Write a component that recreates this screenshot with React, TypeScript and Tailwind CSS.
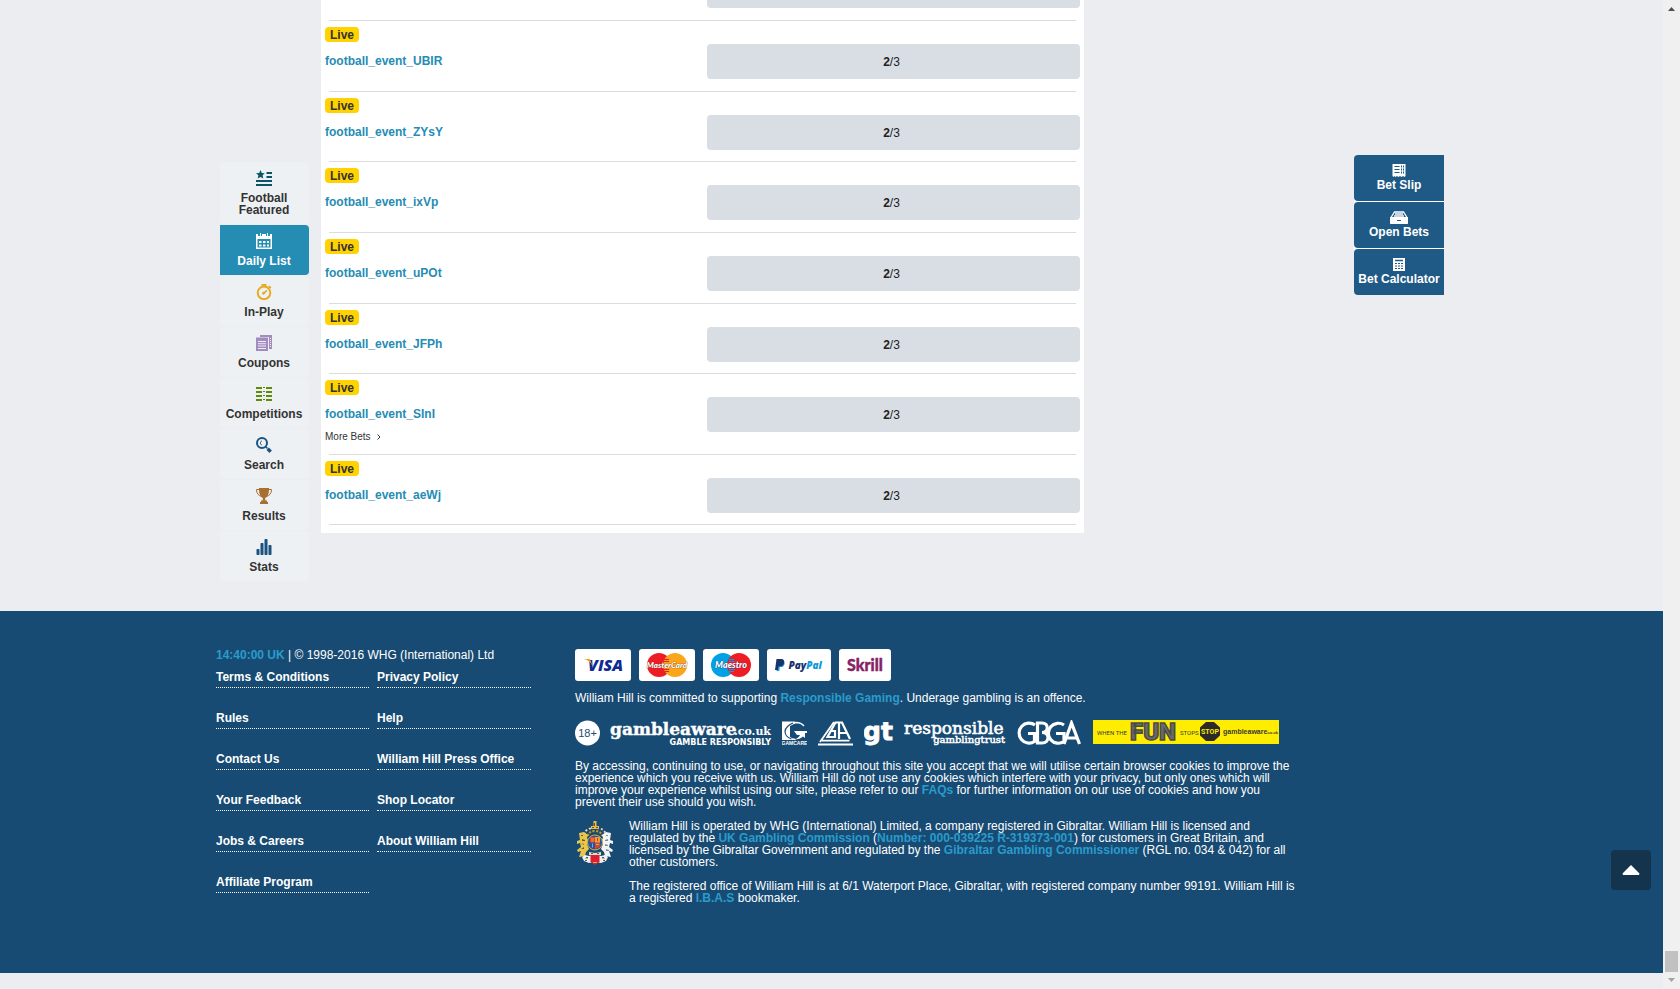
import type { ReactNode } from 'react'

/* ---------- sidebar icons ---------- */

const FeaturedIcon = () => (
  <svg viewBox="0 0 16 16" className="size-4" fill="#0b5566" aria-hidden="true">
    <path d="M4.500 0l1.300 2.900 3 .3-2.200 2.100.7 3.200-2.800-1.600-2.800 1.600.7-3.200L0 3.200l3.200-.3z" />
    <path d="M10.500 2h5.500v2h-5.500zM10.500 6h5.500v2h-5.500zM0 10h16v2H0zM0 14h16v2H0z" />
  </svg>
)
const DailyIcon = () => (
  <svg viewBox="0 0 16 16" className="size-4" fill="none" aria-hidden="true">
    <path fill="#fff" fillRule="evenodd" d="M0 1h2v2h2V0h1v3h1V1h4v2h1V0h1v3h2V1h2v15H0zM1.500 6v8.500h13V6z" />
    <path fill="#fff" d="M3 8h2.500v2H3zM7 8h2.500v2H7zM11 8h2v2h-2zM3 11.500h2.500v2H3zM7 11.500h2.500v2H7zM11 11.500h2v2h-2z" />
  </svg>
)
const InPlayIcon = () => (
  <svg viewBox="0 0 16 16" className="size-4" fill="none" stroke="#e6a91c" aria-hidden="true">
    <circle cx="8" cy="8.800" r="6.300" strokeWidth="1.900" />
    <path d="M5.500 .9h5" strokeWidth="1.800" />
    <path d="M12.800 2.200l2 2" strokeWidth="1.800" />
    <path d="M7.500 9.300L11 6.300" strokeWidth="1.600" />
    <circle cx="7.500" cy="9.300" r="1" fill="#e6a91c" />
  </svg>
)
const CouponsIcon = () => (
  <svg viewBox="0 0 16 16" className="size-4" fill="#a48bbf" aria-hidden="true">
    <path d="M4 0h12.500v14H13V2H4z" />
    <path fillRule="evenodd" d="M0 2.500h12v13.500H0zM2 6v1h8V6zM2 8.300v1h8v-1zM2 10.600v1h8v-1zM2 13v1h8v-1z" />
    <path stroke="#edf1f3" strokeWidth="1" strokeDasharray="1 1" d="M14.500 3v10" />
  </svg>
)
const CompetitionsIcon = () => (
  <svg viewBox="0 0 16 16" className="size-4" fill="#5f8a0c" aria-hidden="true">
    {[1, 5, 9, 13].map((y) => (
      <g key={y}>
        <rect x="0" y={y} width="6" height="2" />
        <rect x="10" y={y} width="6" height="2" />
        <rect x="7" y={y} width="2" height="1" />
      </g>
    ))}
  </svg>
)
const SearchIcon = () => (
  <svg viewBox="0 0 16 16" className="size-4" fill="none" stroke="#1c5280" aria-hidden="true">
    <circle cx="6" cy="6" r="5" strokeWidth="2" />
    <path d="M6 3.800a2.300 2.300 0 0 0 0 4.400" strokeWidth="0.800" />
    <path d="M9.800 9.800l1.700 1.700" strokeWidth="1.500" />
    <path d="M11.700 11.700l3 3" strokeWidth="3.400" />
  </svg>
)
const ResultsIcon = () => (
  <svg viewBox="0 0 16 16" className="size-4" fill="#a96f31" aria-hidden="true">
    <path d="M3 0h10v2c0 4-1.500 7-3.800 8v2.500H11V14h1v2H4v-2h1v-1.500h1.800V10C4.500 9 3 6 3 2z" />
    <path fill="none" stroke="#a96f31" d="M3.500 1.500H.5c0 4 2 6 5 7M12.500 1.500h3c0 4-2 6-5 7" />
  </svg>
)
const StatsIcon = () => (
  <svg viewBox="0 0 16 16" className="size-4" fill="#1c5280" aria-hidden="true">
    <rect x="0.500" y="10" width="3" height="6" rx="0.700" />
    <rect x="4.500" y="4" width="3" height="12" rx="0.700" />
    <rect x="8.500" y="0" width="3" height="16" rx="0.700" />
    <rect x="12.500" y="6" width="3" height="10" rx="0.700" />
  </svg>
)

const sports: { label: string; icon: ReactNode; active?: boolean }[] = [
  { label: 'Football Featured', icon: <FeaturedIcon /> },
  { label: 'Daily List', icon: <DailyIcon />, active: true },
  { label: 'In-Play', icon: <InPlayIcon /> },
  { label: 'Coupons', icon: <CouponsIcon /> },
  { label: 'Competitions', icon: <CompetitionsIcon /> },
  { label: 'Search', icon: <SearchIcon /> },
  { label: 'Results', icon: <ResultsIcon /> },
  { label: 'Stats', icon: <StatsIcon /> },
]

function Sidebar() {
  return (
    <nav className="mt-[162px] flex w-[89px] shrink-0 flex-col gap-px" aria-label="Football">
      {sports.map((s) => (
        <a
          key={s.label}
          href="#"
          className={
            s.active
              ? 'flex flex-col items-center gap-1.5 rounded-r bg-[#258cb4] py-2 pr-[5px] pl-1 text-center font-bold text-white'
              : 'flex flex-col items-center gap-1.5 rounded bg-[#edf1f3] py-2 pr-[5px] pl-1 text-center font-bold text-[#333]'
          }
        >
          {s.icon}
          <span>{s.label}</span>
        </a>
      ))}
    </nav>
  )
}

/* ---------- events ---------- */

const events = [
  { name: 'football_event_UBIR' },
  { name: 'football_event_ZYsY' },
  { name: 'football_event_ixVp' },
  { name: 'football_event_uPOt' },
  { name: 'football_event_JFPh' },
  { name: 'football_event_SInI', more: true },
  { name: 'football_event_aeWj' },
]

function Events() {
  return (
    <main className="w-[763px] shrink-0 self-start bg-white pb-2">
      <div className="flex justify-end px-1">
        <div className="h-2 w-[373px] rounded-b bg-[#d9dee5]" />
      </div>
      <div className="mx-2 mt-3 h-px bg-[#dcdcdc]" />
      <ul>
        {events.map((e) => (
          <li
            key={e.name}
            className={
              e.more
                ? 'flex h-[81px] flex-col'
                : 'flex h-[71px] flex-col last:h-[70px] nth-[3n+2]:h-[70px]'
            }
          >
            <div className="flex flex-1 justify-between px-1">
              <div className="flex flex-col items-start pt-1.5">
                <span className="rounded bg-[#ffd200] px-[5px] pt-px text-center font-bold leading-[14px] text-[#333]">
                  Live
                </span>
                <a href="#" className="mt-[13px] font-bold text-[#258cb4]">
                  {e.name}
                </a>
                {e.more && (
                  <a href="#" className="mt-3 flex items-center gap-1.5 text-[10px] leading-[10px] text-[#333]">
                    More Bets
                    <svg viewBox="0 0 4 6" className="h-1.5 w-1" fill="none" stroke="#333" aria-hidden="true">
                      <path d="M.5.5L3 3 .5 5.500" />
                    </svg>
                  </a>
                )}
              </div>
              <button type="button" className="mt-[23px] h-[35px] w-[373px] rounded bg-[#d9dee5] pr-1 text-[#222]">
                <b>2</b>/3
              </button>
            </div>
            <div className="mx-2 h-px bg-[#dcdcdc]" />
          </li>
        ))}
      </ul>
    </main>
  )
}

/* ---------- bet tools ---------- */

const SlipIcon = () => (
  <svg viewBox="0 0 14 13" className="h-[13px] w-3.5" aria-hidden="true">
    <path fill="#fff" d="M.5 0h13v12l-1 1-1.500-1-1.500 1L8 12l-1.500 1L5 12l-1.500 1-1-1-1 1-1-1z" />
    <path stroke="#1f5a86" d="M2.500 2.500h5M2.500 5.500h5M2.500 8.500h5M9.500 1.500v2M9.500 4.500v2M9.500 7.500v2M11.500 1.500v2M11.500 4.500v2M11.500 7.500v2" />
  </svg>
)
const TrayIcon = () => (
  <svg viewBox="0 0 18 13" className="h-[13px] w-[18px]" aria-hidden="true">
    <path fill="none" stroke="#fff" strokeWidth="1.300" d="M1 6.500L4.500 1h9L17 6.500M4 5h10M5 3h8" />
    <path fill="#fff" d="M0 6h18v6.500l-.5.5H.5l-.5-.5z" />
    <path stroke="#1f5a86" d="M7 9.500h4" />
  </svg>
)
const CalcIcon = () => (
  <svg viewBox="0 0 12 13" className="h-[13px] w-3" aria-hidden="true">
    <path fill="#fff" d="M0 0h12v13H0z" />
    <path stroke="#1f5a86" strokeWidth="1.500" d="M2 2.500h8" />
    <path stroke="#1f5a86" strokeWidth="1.200" strokeDasharray="2 1" d="M2 5.500h8M2 8h8M2 10.500h8" />
  </svg>
)

const tools: { label: string; icon: ReactNode }[] = [
  { label: 'Bet Slip', icon: <SlipIcon /> },
  { label: 'Open Bets', icon: <TrayIcon /> },
  { label: 'Bet Calculator', icon: <CalcIcon /> },
]

function BetTools() {
  return (
    <aside className="mt-[155px] flex w-[90px] flex-col gap-px self-start rounded-l bg-white">
      {tools.map((t) => (
        <button
          key={t.label}
          type="button"
          className="flex h-[46px] flex-col items-center gap-0.5 rounded-l bg-[#1f5a86] pt-[9px] font-bold whitespace-nowrap text-white"
        >
          {t.icon}
          <span>{t.label}</span>
        </button>
      ))}
    </aside>
  )
}

/* ---------- footer logos ---------- */

const SANS = 'Liberation Sans, sans-serif'
const SLAB = 'DejaVu Serif, serif'
const NARROW = 'Roboto, sans-serif'

function PaymentCards() {
  return (
    <div className="flex gap-2">
      <svg viewBox="0 0 56 32" className="h-8 w-14" role="img" aria-label="Visa">
        <rect width="56" height="32" rx="3" fill="#fff" />
        <text x="13" y="22" fontFamily="Open Sans, sans-serif" fontWeight="800" fontStyle="italic" fontSize="16" fill="#0f2a94">VISA</text>
        <path fill="#f7a01b" d="M9 10h6l2.500 7c-2-4-4.500-6-8.500-7z" />
      </svg>
      <svg viewBox="0 0 56 32" className="h-8 w-14" role="img" aria-label="MasterCard">
        <rect width="56" height="32" rx="3" fill="#fff" />
        <circle cx="20" cy="16" r="12" fill="#ee1c25" />
        <circle cx="36" cy="16" r="12" fill="#faa61a" />
        <path stroke="#ee1c25" d="M25 10.500h5M24 12.500h6M24 20.500h6M25 22.500h5" />
        <text x="28" y="19" textAnchor="middle" fontFamily="Lato, sans-serif" fontWeight="900" fontStyle="italic" fontSize="8" fill="#fff" stroke="#7a3a20" strokeWidth="0.600" paintOrder="stroke">MasterCard</text>
      </svg>
      <svg viewBox="0 0 56 32" className="h-8 w-14" role="img" aria-label="Maestro">
        <rect width="56" height="32" rx="3" fill="#fff" />
        <circle cx="20" cy="16" r="12" fill="#00a2e5" />
        <circle cx="36" cy="16" r="12" fill="#ee1c25" />
        <path stroke="#00a2e5" d="M26 10.500h5M26 12.500h6M26 20.500h6M26 22.500h5" />
        <text x="28" y="19" textAnchor="middle" fontFamily="Lato, sans-serif" fontWeight="900" fontStyle="italic" fontSize="9" fill="#fff" stroke="#3a3a70" strokeWidth="0.600" paintOrder="stroke">Maestro</text>
      </svg>
      <svg viewBox="0 0 64 32" className="h-8 w-16" role="img" aria-label="PayPal">
        <rect width="64" height="32" rx="3" fill="#fff" />
        <path fill="#0d99d6" d="M11.500 12h5c1.800 1 1.300 5.500-1.700 6h-2l-.6 4H9.500z" />
        <path fill="#17326d" d="M9.500 10h5.500c3.500.3 3 7-2 7.300h-1.600l-.6 3.700H8z" />
        <text x="21.500" y="20" fontFamily="Open Sans, sans-serif" fontWeight="800" fontStyle="italic" fontSize="10" fill="#17326d">Pay<tspan fill="#0d99d6">Pal</tspan></text>
      </svg>
      <svg viewBox="0 0 52 32" className="h-8 w-[52px]" role="img" aria-label="Skrill">
        <rect width="52" height="32" rx="3" fill="#fff" />
        <text x="26" y="22" textAnchor="middle" fontFamily="Lato, sans-serif" fontWeight="900" fontSize="16" fill="#862165" stroke="#862165" strokeWidth="0.400">Skrill</text>
      </svg>
    </div>
  )
}

function PartnerLogos() {
  return (
    <div className="mt-4 flex gap-2.5">
      <svg viewBox="0 0 25 26" className="h-[26px] w-[25px]" role="img" aria-label="18+">
        <circle cx="12.500" cy="13" r="12.500" fill="#fff" />
        <text x="12.500" y="17" textAnchor="middle" fontFamily={SANS} fontSize="11" fill="#184b73">18+</text>
      </svg>
      <svg viewBox="0 0 162 26" className="h-[26px] w-[162px]" role="img" aria-label="gambleaware.co.uk, gamble responsibly" fill="#fff">
        <text x="0" y="15" fontFamily={SLAB} fontWeight="700" fontSize="17" stroke="#fff" strokeWidth="0.400">gambleaware</text>
        <text x="161" y="15" textAnchor="end" fontFamily={SLAB} fontWeight="700" fontSize="11">.co.uk</text>
        <text x="161" y="25" textAnchor="end" fontFamily="DejaVu Sans, sans-serif" fontWeight="700" fontSize="8">GAMBLE RESPONSIBLY</text>
      </svg>
      <svg viewBox="0 0 25 26" className="h-[26px] w-[25px]" role="img" aria-label="GamCare">
        <path fill="#fff" d="M0 1.500h13v2L8 6v12l4 2H0z" />
        <path fill="none" stroke="#fff" strokeWidth="1.500" d="M22 6c-2-2.500-5-3.500-8-3.500C8 3 4.500 7 4.500 11.500s4 8 9 8" />
        <path fill="none" stroke="#184b73" strokeWidth="1.200" d="M11 3C7 4.500 3 8 3 11.500S6 18 9.500 19" />
        <path fill="#fff" d="M12 11h13v2h-2v5l-2-1.500c-2 2-5 3-8.500 3 2.500-1 4.500-2.500 5.500-4.500h-3z" />
        <text x="12.500" y="25" textAnchor="middle" fontFamily={SANS} fontWeight="700" fontSize="5" fill="#fff">GAMCARE</text>
      </svg>
      <svg viewBox="0 0 37 26" className="h-[26px] w-[37px]" role="img" aria-label="GA" fill="none" stroke="#fff" strokeWidth="2.200">
        <path d="M21 2.500h-2.500L10.500 17H18v-6h-4.500" />
        <path d="M22 19V2.500h3L33 19M22 13h8" />
        <path d="M5 20.700h27.500M1 24.500h35M17 2L3 22" strokeWidth="1.800" />
      </svg>
      <svg viewBox="0 0 30 26" className="h-[26px] w-[30px]" role="img" aria-label="gt">
        <text x="-1" y="19.500" fontFamily="DejaVu Sans, sans-serif" fontWeight="700" fontSize="25" fill="#fff" stroke="#fff" strokeWidth="0.800">gt</text>
      </svg>
      <svg viewBox="0 0 102 26" className="h-[26px] w-[102px]" role="img" aria-label="responsible gambling trust" fill="#fff">
        <text x="0" y="14" fontFamily={SLAB} fontSize="17" stroke="#fff" strokeWidth="0.600">responsible</text>
        <text x="101" y="23" textAnchor="end" fontFamily={SLAB} fontSize="10" stroke="#fff" strokeWidth="0.500">gamblingtrust</text>
      </svg>
      <svg viewBox="0 0 65 26" className="h-[26px] w-[65px]" role="img" aria-label="GBGA" fill="none" stroke="#fff" strokeWidth="3.200">
        <path d="M19 5A10 10 0 1 0 18.500 21.500V13.500H12" />
        <path d="M21.500 3H26c7 0 7 9.500 0 9.500 8 0 8 10.500 0 10.500h-4.500z" />
        <path d="M48 5A10 10 0 1 0 48 21.500V13.500h-8" />
        <path d="M48 24L55.500 3l8 21M50 18h11" />
      </svg>
      <svg viewBox="0 0 188 26" className="h-[26px] w-[188px]" role="img" aria-label="When the fun stops, stop">
        <rect x="2" width="186" height="24" fill="#ffed00" />
        <g fill="#3a3a36">
          <text x="6" y="14.500" fontFamily={NARROW} fontSize="6">WHEN THE</text>
          <text x="39" y="20" fontFamily="Roboto, sans-serif" fontWeight="900" fontSize="24" fill="#6b6a66" stroke="#4a4a47" strokeWidth="1.500">FUN</text>
          <text x="89" y="14.500" fontFamily={NARROW} fontSize="6">STOPS</text>
          <path fill="#2b2a29" d="M115 2h8l6 5.500v8l-6 5.500h-8l-6-5.500v-8z" />
          <text x="119" y="14" textAnchor="middle" fontFamily={NARROW} fontWeight="700" fontSize="7" fill="#ffed00">STOP</text>
          <text x="132" y="14" fontFamily={SANS} fontWeight="700" fontSize="7">gambleaware</text>
          <text x="187" y="14" textAnchor="end" fontFamily={SANS} fontWeight="700" fontSize="4">.co.uk</text>
        </g>
      </svg>
    </div>
  )
}

function Crest() {
  return (
    <svg viewBox="0 0 38 44" className="mt-px ml-px h-11 w-[38px] shrink-0" role="img" aria-label="Royal coat of arms">
      <path fill="none" stroke="#e9dfb4" strokeWidth="2" strokeDasharray="2 2" d="M9 14C8 9 13 7 19 7s11 2 10 7" />
      <path fill="none" stroke="#c99d2c" strokeWidth="2" strokeDasharray="2 1.500" d="M12 15c0-3 3-5 7-5s7 2 7 5" />
      <path fill="#e3c04a" d="M17.500 0h3v5h-3zM15 5h8v3h-8z" />
      <path fill="#7a4a1d" d="M18 2h1v3h-1zM16 6h2v1h-2zM20 6h2v1h-2z" />
      <path fill="#e8c64d" d="M3 12l5-1 4 3-1 3 2 3-2 3 2 5-3 3-1 4-6 1 2-6-3 1-1-2 4-3-1-4-3 1v-3l3-1z" />
      <path fill="#7a5a1c" d="M5 14h2v1H5zM6 18l3 1v1H6zM5 22l3 1v1zM5 28l3-2v2z" />
      <path fill="#f4f4f4" d="M35 12l-5-1-4 3 1 3-2 3 2 3-2 5 3 3 1 4 6 1-2-6 3 1 1-2-4-3 1-4 3 1v-3l-3-1z" />
      <path fill="#7f8da0" d="M30 14h2v1h-2zM29 19l3-1v2h-3zM29 23l3 1v1h-3zM30 28l3 1v1h-3z" />
      <circle cx="19" cy="21.500" r="7.500" fill="#2853a0" stroke="#d9b13b" />
      <path fill="#d8472e" d="M14 16h5v5.500h-5zM19 21.500h5v4l-5 3z" />
      <path fill="#e9a13c" d="M19 16h5v5.500h-5zM15 17.500h3v1h-3zM15 19.500h3v1h-3zM20 23h3v1h-3z" />
      <path fill="#7fa3dd" d="M16 22.500h1v4h-1z" />
      <path fill="#b8452e" d="M21 17h1v3h-1z" />
      <path fill="#f1f1f1" d="M6 36l3-2 4 1 6-2 6 2 4-1 3 2-2 4-5 2-6-1-6 1-5-2z" />
      <path fill="#34609c" d="M10 36h2v1h-2zM26 36h2v1h-2zM9 39h2v1H9zM27 39h2v1h-2z" />
      <path fill="#d9b13b" d="M9 37h3v1H9zM26 37h3v1h-3z" />
      <path fill="#d91f34" d="M14.500 34h9v7L19 44l-4.500-3z" />
      <path fill="#e9dfb4" d="M13 31l6 1 6-1v3H13z" />
      <path fill="#34609c" d="M15 32h2v1h-2zM21 32h2v1h-2z" />
      <path fill="#e0b840" d="M17 41h4v1h-4z" />
    </svg>
  )
}

/* ---------- footer ---------- */

const footerLinks = [
  'Terms & Conditions',
  'Privacy Policy',
  'Rules',
  'Help',
  'Contact Us',
  'William Hill Press Office',
  'Your Feedback',
  'Shop Locator',
  'Jobs & Careers',
  'About William Hill',
  'Affiliate Program',
]

const Accent = ({ children }: { children: ReactNode }) => (
  <a href="#" className="font-bold text-[#2a9bcb]">
    {children}
  </a>
)

function Footer() {
  return (
    <footer className="bg-[#184b73] pt-[38px] pb-[69px] text-white">
      <div className="mx-auto flex w-full max-w-[1231px] items-start">
        <div className="w-[315px] shrink-0">
          <p>
            <span className="font-bold text-[#2a9bcb]">14:40:00 UK</span> | © 1998-2016 WHG (International) Ltd
          </p>
          <ul className="mt-2.5 grid grid-cols-[153px_1fr] gap-x-2 gap-y-6">
            {footerLinks.map((l) => (
              <li key={l} className="border-b border-dotted border-white pb-1 font-bold">
                <a href="#" className="block">
                  {l}
                </a>
              </li>
            ))}
          </ul>
        </div>
        <div className="ml-11 w-[724px]">
          <PaymentCards />
          <p className="mt-[11px]">
            William Hill is committed to supporting <Accent>Responsible Gaming</Accent>. Underage gambling is an offence.
          </p>
          <PartnerLogos />
          <p className="mt-3.5">
            By accessing, continuing to use, or navigating throughout this site you accept that we will utilise certain
            browser cookies to improve the experience which you receive with us. William Hill do not use any cookies
            which interfere with your privacy, but only ones which will improve your experience whilst using our site,
            please refer to our <Accent>FAQs</Accent> for further information on our use of cookies and how you prevent
            their use should you wish.
          </p>
          <div className="mt-3 flex gap-[15px]">
            <Crest />
            <div className="flex flex-col gap-3">
              <p>
                William Hill is operated by WHG (International) Limited, a company registered in Gibraltar. William Hill
                is licensed and regulated by the <Accent>UK Gambling Commission</Accent> (
                <Accent>Number: 000-039225 R-319373-001</Accent>) for customers in Great Britain, and licensed by the
                Gibraltar Government and regulated by the <Accent>Gibraltar Gambling Commissioner</Accent> (RGL no. 034
                &amp; 042) for all other customers.
              </p>
              <p>
                The registered office of William Hill is at 6/1 Waterport Place, Gibraltar, with registered company
                number 99191. William Hill is a registered <Accent>I.B.A.S</Accent> bookmaker.
              </p>
            </div>
          </div>
        </div>
      </div>
    </footer>
  )
}

function ScrollRail() {
  return (
    <div className="flex w-[17px] shrink-0 flex-col items-center justify-between bg-[#f0f0f0]" aria-hidden="true">
      <svg viewBox="0 0 17 17" className="size-[17px]">
        <path fill="#505050" d="M5 11h7L8.500 7z" />
      </svg>
      <div className="flex flex-col items-center">
        <div className="h-[21px] w-[13px] bg-[#c1c1c1]" />
        <svg viewBox="0 0 17 17" className="size-[17px]">
          <path fill="#a3a3a3" d="M5 6h7L8.500 10z" />
        </svg>
      </div>
    </div>
  )
}

export default function App() {
  return (
    <div className="flex min-h-screen bg-[#ecedf1] font-['Liberation_Sans',Arial,sans-serif] text-[12px] leading-[12px]">
      <div className="min-w-0 flex-1">
        <div className="mx-auto flex w-full max-w-[1231px] pr-[3px] pb-[30px] pl-1">
          <Sidebar />
          <div className="mr-auto ml-3">
            <Events />
          </div>
          <BetTools />
        </div>
        <Footer />
      </div>
      <ScrollRail />
      <button
        type="button"
        aria-label="Back to top"
        className="fixed right-[29px] bottom-[99px] flex size-10 items-center justify-center rounded-sm bg-[#14334c]"
      >
        <svg viewBox="0 0 18 10" className="h-2.5 w-[18px]" aria-hidden="true">
          <path fill="#fff" d="M9 0l8.500 8.500L17 10H1L.5 8.500z" />
        </svg>
      </button>
    </div>
  )
}
